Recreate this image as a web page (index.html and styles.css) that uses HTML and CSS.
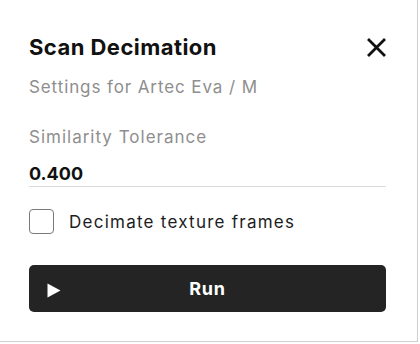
FILE: index.html
```html
<!DOCTYPE html>
<html>
<head>
<meta charset="utf-8">
<link rel="stylesheet" href="styles.css">
</head>
<body>
<div class="card">
  <div class="header">
    <h1 class="title">Scan Decimation</h1>
    <button class="close" aria-label="Close">
      <svg width="19" height="19" viewBox="0 0 19 19"><path d="M2 2L17 17M17 2L2 17" stroke="#111" stroke-width="2.8" stroke-linecap="square"/></svg>
    </button>
  </div>
  <div class="subtitle">Settings for Artec Eva / M</div>
  <div class="field">
    <div class="label">Similarity Tolerance</div>
    <div class="value">0.400</div>
  </div>
  <label class="check">
    <span class="box"></span>
    <span class="check-text">Decimate texture frames</span>
  </label>
  <button class="run">
    <svg class="play" width="14" height="15" viewBox="0 0 14 15"><path d="M0.5 0.5L13.5 7.5L0.5 14.5Z" fill="#fff"/></svg>
    <span class="run-text">Run</span>
  </button>
</div>
</body>
</html>
```
FILE: styles.css
```css
* { box-sizing: border-box; }
html, body { margin: 0; padding: 0; background: #fff; }
body { font-family: Inter, "Noto Sans", sans-serif; }
.card {
  width: 418px;
  height: 342px;
  border-right: 1px solid #cfcfcf;
  border-bottom: 1px solid #cfcfcf;
  padding: 34px 31px 0 29px;
  display: flex;
  flex-direction: column;
}
.header {
  display: flex;
  justify-content: space-between;
  align-items: flex-start;
  height: 26px;
}
.title {
  margin: 0;
  font-size: 22px;
  line-height: 26px;
  font-weight: 700;
  color: #111;
  letter-spacing: 0.45px;
}
.close {
  border: none;
  background: none;
  padding: 0;
  margin-top: 4px;
  width: 19px;
  height: 19px;
  display: flex;
}
.subtitle {
  margin-top: 17px;
  font-size: 17px;
  line-height: 20px;
  letter-spacing: 0.9px;
  color: #8e8e8e;
}
.field {
  margin-top: 30px;
  border-bottom: 1px solid #dcdcdc;
  padding-bottom: 1px;
}
.label {
  font-size: 17px;
  line-height: 20px;
  letter-spacing: 1px;
  color: #8e8e8e;
}
.value {
  margin-top: 16px;
  font-size: 18px;
  line-height: 22px;
  font-weight: 700;
  color: #111;
}
.check {
  margin-top: 22px;
  display: flex;
  align-items: center;
  gap: 15px;
}
.box {
  width: 25px;
  height: 25px;
  border: 1.5px solid #7a7a7a;
  border-radius: 4px;
}
.check-text {
  font-size: 17px;
  letter-spacing: 1.25px;
  color: #1d1d1d;
}
.run {
  margin-top: 31px;
  height: 47px;
  width: 100%;
  background: #242424;
  border: none;
  border-radius: 5px;
  display: flex;
  align-items: center;
  position: relative;
  font-family: Inter, "Noto Sans", sans-serif;
}
.play { position: absolute; left: 18px; top: 18px; }
.run-text {
  flex: 1;
  text-align: center;
  color: #fff;
  font-size: 18px;
  font-weight: 700;
  letter-spacing: 0.8px;
}
```
